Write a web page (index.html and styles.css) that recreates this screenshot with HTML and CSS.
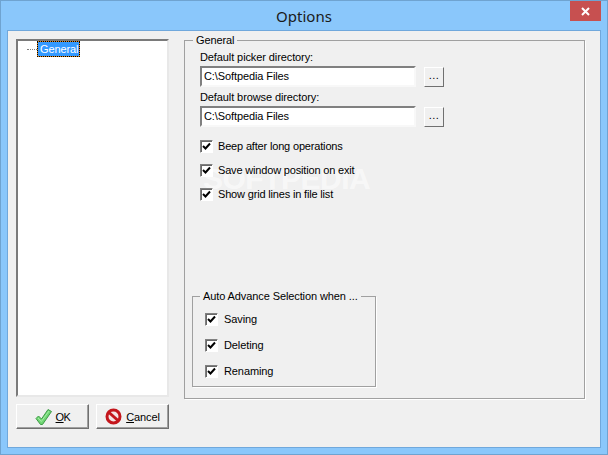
FILE: index.html
```html
<!DOCTYPE html>
<html lang="en">
<head>
  <meta charset="UTF-8">
  <title>Options</title>
  <link rel="stylesheet" href="styles.css">
</head>
<body>
  <div class="window">
    <div class="titlebar">
      <span class="title">Options</span>
      <div class="close-btn">
        <svg width="9" height="9" viewBox="0 0 9 9"><path d="M1 1l7 7M8 1L1 8" stroke="#fff" stroke-width="2" fill="none"/></svg>
      </div>
    </div>
    <div class="client">
      <div class="left-col">
        <div class="tree">
          <div class="tree-row">
            <span class="tree-line"></span>
            <span class="tree-item">General</span>
          </div>
        </div>
        <div class="btn-row">
          <div class="btn">
            <svg width="17" height="18" viewBox="0 0 17 18">
              <path d="M1 10.5L3.5 8L6.5 11L13 1.5L16.5 3.5L7.5 16.5H5.5Z" fill="#6fd672" stroke="#3f9a48" stroke-width="1"/>
              <path d="M3 10L6.3 13.5L14 3" fill="none" stroke="#a6eda6" stroke-width="1"/>
            </svg>
            <span class="ok-label"><u>O</u>K</span>
          </div>
          <div class="btn">
            <svg width="17" height="17" viewBox="0 0 17 17">
              <circle cx="8.5" cy="8.5" r="6.5" fill="#f4e4e4" stroke="#c4161c" stroke-width="3"/>
              <path d="M4 4.5L13 12.5" stroke="#c4161c" stroke-width="3"/>
            </svg>
            <span><u>C</u>ancel</span>
          </div>
        </div>
      </div>
      <fieldset class="group main-group">
        <legend>General</legend>
        <div class="watermark">SOFTPEDIA</div>
        <div class="field-label">Default picker directory:</div>
        <div class="path-row">
          <div class="path-input">C:\Softpedia Files</div>
          <div class="browse-btn">...</div>
        </div>
        <div class="field-label">Default browse directory:</div>
        <div class="path-row">
          <div class="path-input">C:\Softpedia Files</div>
          <div class="browse-btn">...</div>
        </div>
        <div class="check-list">
          <div class="check-row"><span class="checkbox"><svg width="9" height="9" viewBox="0 0 9 9"><path d="M1 4l2.5 2.5L8 1.5" fill="none" stroke="#000" stroke-width="2"/></svg></span>Beep after long operations</div>
          <div class="check-row"><span class="checkbox"><svg width="9" height="9" viewBox="0 0 9 9"><path d="M1 4l2.5 2.5L8 1.5" fill="none" stroke="#000" stroke-width="2"/></svg></span>Save window position on exit</div>
          <div class="check-row"><span class="checkbox"><svg width="9" height="9" viewBox="0 0 9 9"><path d="M1 4l2.5 2.5L8 1.5" fill="none" stroke="#000" stroke-width="2"/></svg></span>Show grid lines in file list</div>
        </div>
        <fieldset class="group advance-group">
          <legend>Auto Advance Selection when ...</legend>
          <div class="check-row"><span class="checkbox"><svg width="9" height="9" viewBox="0 0 9 9"><path d="M1 4l2.5 2.5L8 1.5" fill="none" stroke="#000" stroke-width="2"/></svg></span>Saving</div>
          <div class="check-row"><span class="checkbox"><svg width="9" height="9" viewBox="0 0 9 9"><path d="M1 4l2.5 2.5L8 1.5" fill="none" stroke="#000" stroke-width="2"/></svg></span>Deleting</div>
          <div class="check-row"><span class="checkbox"><svg width="9" height="9" viewBox="0 0 9 9"><path d="M1 4l2.5 2.5L8 1.5" fill="none" stroke="#000" stroke-width="2"/></svg></span>Renaming</div>
        </fieldset>
      </fieldset>
    </div>
  </div>
</body>
</html>
```
FILE: styles.css
```css
html, body {
  margin: 0;
  padding: 0;
}
body {
  width: 608px;
  height: 455px;
  overflow: hidden;
  font-family: "Liberation Sans", Arial, sans-serif;
  font-size: 11px;
  letter-spacing: -0.1px;
  color: #000;
}
.window {
  width: 608px;
  height: 455px;
  box-sizing: border-box;
  background: #8ac7fb;
  border: 1px solid #6fa3d0;
  padding: 0 7px 7px 7px;
  display: flex;
  flex-direction: column;
}
.titlebar {
  height: 30px;
  flex: none;
  display: flex;
  justify-content: center;
  align-items: center;
  position: relative;
}
.title {
  font-family: "Noto Sans", "Open Sans", sans-serif;
  font-size: 15px;
  letter-spacing: 0;
  color: #1a1a1a;
}
.close-btn {
  position: absolute;
  top: 0;
  right: -1px;
  width: 31px;
  height: 20px;
  background: #c75050;
  display: flex;
  justify-content: center;
  align-items: center;
}
.client {
  flex: 1;
  background: #f0f0f0;
  outline: 1px solid #70a8dc;
  display: flex;
  gap: 15px;
  padding: 8px 15px 18px 8px;
  min-height: 0;
}
.left-col {
  width: 153px;
  display: flex;
  flex-direction: column;
  gap: 7px;
  flex: none;
}
.tree {
  flex: 1;
  background: #fff;
  border: 2px solid;
  border-color: #7a7a7a #e8e8e8 #e8e8e8 #7a7a7a;
  padding: 0 0 0 9px;
}
.tree-row {
  display: flex;
  align-items: center;
}
.tree-line {
  width: 10px;
  border-top: 1px dotted #808080;
}
.tree-item {
  background: #3399ff;
  color: #fff;
  border: 1px solid #e08a1e;
  outline: 1px dotted #000;
  outline-offset: -1px;
  padding: 0 1px 0 2px;
  height: 14px;
  line-height: 14px;
}
.btn-row {
  display: flex;
  justify-content: space-between;
}
.btn {
  width: 73px;
  height: 25px;
  box-sizing: border-box;
  background: #f0f0f0;
  border: 1px solid;
  border-color: #fff #707070 #707070 #fff;
  box-shadow: inset -1px -1px 0 #a0a0a0;
  display: flex;
  justify-content: center;
  align-items: center;
  gap: 4px;
}
.ok-label {
  letter-spacing: -0.5px;
}
.group {
  margin: 0;
  border: 1px solid #a0a0a0;
  box-shadow: 1px 1px 0 #fff;
  padding: 0;
}
.group legend {
  padding: 0 3px;
  line-height: 13px;
  white-space: nowrap;
}
.main-group {
  flex: 1;
  min-width: 0;
  padding: 0 0 0 15px;
  position: relative;
  z-index: 0;
  height: 365px;
  margin-top: -5px;
  box-sizing: border-box;
}
.main-group > legend {
  margin-left: -7px;
}
.field-label {
  height: 15px;
  line-height: 14px;
  margin-top: 3px;
}
.path-row {
  display: flex;
  align-items: center;
  gap: 8px;
  height: 21px;
  margin-top: 1px;
}
.path-input {
  width: 216px;
  height: 21px;
  box-sizing: border-box;
  background: #fff;
  border: 2px solid;
  border-color: #808080 #f8f8f8 #f8f8f8 #808080;
  padding-left: 2px;
  line-height: 16px;
}
.browse-btn {
  width: 20px;
  height: 20px;
  box-sizing: border-box;
  border: 1px solid;
  border-color: #fff #707070 #707070 #fff;
  text-align: center;
  line-height: 15px;
  letter-spacing: 0.4px;
}
.check-list {
  margin-top: 12px;
  display: flex;
  flex-direction: column;
  gap: 10px;
  letter-spacing: -0.17px;
}
.check-row {
  display: flex;
  align-items: center;
  gap: 5px;
  height: 14px;
  line-height: 14px;
}
.checkbox {
  width: 13px;
  height: 13px;
  box-sizing: border-box;
  flex: none;
  background: #fff;
  border: 1px solid;
  border-color: #808080 #fff #fff #808080;
  box-shadow: inset 1px 1px 0 #696969;
  display: flex;
  justify-content: center;
  align-items: center;
}
.advance-group {
  width: 184px;
  margin: 89px 0 0 -8px;
  height: 97px;
  box-sizing: border-box;
  padding: 9px 0 0 12px;
  display: flex;
  flex-direction: column;
  gap: 12px;
}
.advance-group > legend {
  margin-left: -5px;
}
.advance-group .check-row {
  gap: 6px;
}
.watermark {
  position: absolute;
  z-index: -1;
  top: 115px;
  left: 18px;
  font-size: 30px;
  font-weight: bold;
  letter-spacing: -0.5px;
  color: rgba(255, 255, 255, 0.55);
  pointer-events: none;
}
```
